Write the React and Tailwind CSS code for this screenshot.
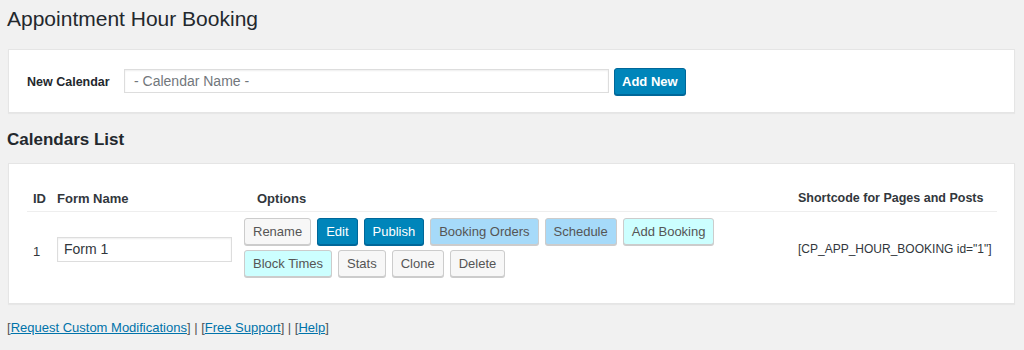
export default function App() {
  const font = { fontFamily: '"Liberation Sans", Arial, sans-serif' };
  const base = "h-[27px] px-[8px] rounded-[3px] border text-[13px] leading-[25px] whitespace-nowrap";
  const btnGray = base + " border-[#cccccc] bg-[#f7f7f7] text-[#555555] shadow-[0_1px_0_#cccccc]";
  const btnBlue = base + " border-[#006799] bg-[#0085ba] text-white shadow-[0_1px_0_#006799]";
  const btnLBlue = base + " border-[#cccccc] bg-[#a6daf9] text-[#555555] shadow-[0_1px_0_#cccccc]";
  const btnCyan = base + " border-[#cccccc] bg-[#ccffff] text-[#555555] shadow-[0_1px_0_#cccccc]";
  return (
    <div className="w-[1024px] h-[350px] bg-[#f1f1f1] text-[#444444] overflow-hidden" style={font}>
      <div className="w-[1016px] h-[350px] pl-[8px] pr-[1px]">
        <h1 className="text-[21px] leading-[29px] pt-[4px] text-[#23282d] -ml-[1px]">Appointment Hour Booking</h1>
        <div className="mt-[16px] h-[64px] bg-white border border-[#e5e5e5] shadow-[0_1px_1px_rgba(0,0,0,0.04)] flex items-center pl-[18px]">
          <span className="text-[12.5px] font-bold text-[#23282d] w-[97px] mt-[2px] shrink-0">New Calendar</span>
          <div className="w-[485px] h-[24px] shrink-0 border border-[#dddddd] shadow-[inset_0_1px_2px_rgba(0,0,0,0.07)] flex items-center pl-[9px] text-[14px] text-[#72777c]">- Calendar Name -</div>
          <button className={base + " border-[#006799] bg-[#0085ba] text-white shadow-[0_1px_0_#006799] ml-[5px] font-bold !px-[7px]"}>Add New</button>
        </div>
        <h2 className="mt-[16px] text-[17px] font-bold text-[#23282d] leading-[22px] -ml-[1px]">Calendars List</h2>
        <div className="mt-[12px] h-[141px] bg-white border border-[#e5e5e5] shadow-[0_1px_1px_rgba(0,0,0,0.04)] pl-[18px] pt-[25px]">
          <div className="w-[970px]">
            <div className="flex h-[23px] border-b border-[#eeeeee] text-[13px] font-bold text-[#32373c] items-start">
              <div className="w-[24px] shrink-0 pl-[6px]">ID</div>
              <div className="w-[193px] shrink-0 pl-[6px]">Form Name</div>
              <div className="w-[548px] shrink-0 pl-[13px]">Options</div>
              <div className="pl-[6px] whitespace-nowrap text-[12.5px]">Shortcode for Pages and Posts</div>
            </div>
            <div className="flex items-start text-[13px]">
              <div className="w-[24px] shrink-0 pl-[6px] text-[#32373c] mt-[30px]">1</div>
              <div className="w-[193px] shrink-0 pl-[6px] mt-[25px]">
                <div className="w-[175px] h-[25px] border border-[#dddddd] shadow-[inset_0_1px_2px_rgba(0,0,0,0.07)] flex items-center pl-[6px] text-[14px] text-[#32373c]">Form 1</div>
              </div>
              <div className="w-[548px] shrink-0 flex flex-wrap gap-x-[6px] gap-y-[5px] pt-[6px]">
                <button className={btnGray}>Rename</button>
                <button className={btnBlue}>Edit</button>
                <button className={btnBlue}>Publish</button>
                <button className={btnLBlue}>Booking Orders</button>
                <button className={btnLBlue}>Schedule</button>
                <button className={btnCyan}>Add Booking</button>
                <button className={btnCyan}>Block Times</button>
                <button className={btnGray}>Stats</button>
                <button className={btnGray}>Clone</button>
                <button className={btnGray}>Delete</button>
              </div>
              <div className="pl-[6px] text-[#32373c] text-[12px] whitespace-nowrap mt-[28px]">[CP_APP_HOUR_BOOKING id="1"]</div>
            </div>
          </div>
        </div>
        <div className="mt-[14px] text-[13px] text-[#555555] -ml-[1px]">
          [<a className="text-[#0073aa] underline">Request Custom Modifications</a>] | [<a className="text-[#0073aa] underline">Free Support</a>] | [<a className="text-[#0073aa] underline">Help</a>]
        </div>
      </div>
    </div>
  );
}
